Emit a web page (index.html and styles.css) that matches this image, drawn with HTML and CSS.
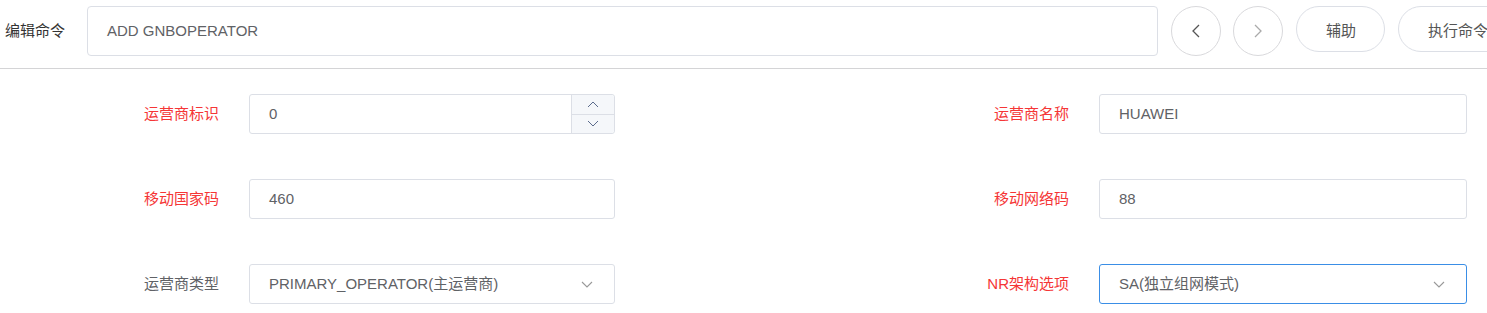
FILE: index.html
```html
<!DOCTYPE html>
<html lang="zh-CN">
<head>
<meta charset="utf-8">
<title>编辑命令</title>
<link rel="stylesheet" href="styles.css">
</head>
<body>
<div class="header">
  <div class="cmd-label">编辑命令</div>
  <div class="cmd-input">ADD GNBOPERATOR</div>
  <button class="circle-btn">
    <svg width="10" height="14" viewBox="0 0 10 14"><path d="M8 1 L2 7 L8 13" fill="none" stroke="#555" stroke-width="1.3"/></svg>
  </button>
  <button class="circle-btn disabled">
    <svg width="10" height="14" viewBox="0 0 10 14"><path d="M2 1 L8 7 L2 13" fill="none" stroke="#aaa" stroke-width="1.3"/></svg>
  </button>
  <button class="pill-btn">辅助</button>
  <button class="pill-btn">执行命令</button>
</div>

<div class="form">
  <div class="row">
    <div class="label req">运营商标识</div>
    <div class="field number">
      <span class="value">0</span>
      <div class="spinner">
        <div class="spin-up"><svg width="12" height="7" viewBox="0 0 12 7"><path d="M1 6 L6 1 L11 6" fill="none" stroke="#5b6b8c" stroke-width="1"/></svg></div>
        <div class="spin-down"><svg width="12" height="7" viewBox="0 0 12 7"><path d="M1 1 L6 6 L11 1" fill="none" stroke="#5b6b8c" stroke-width="1"/></svg></div>
      </div>
    </div>
    <div class="label req">运营商名称</div>
    <div class="field"><span class="value">HUAWEI</span></div>
  </div>

  <div class="row">
    <div class="label req">移动国家码</div>
    <div class="field"><span class="value">460</span></div>
    <div class="label req">移动网络码</div>
    <div class="field"><span class="value">88</span></div>
  </div>

  <div class="row">
    <div class="label">运营商类型</div>
    <div class="field select">
      <span class="value">PRIMARY_OPERATOR(主运营商)</span>
      <svg class="arrow" width="12" height="7" viewBox="0 0 12 7"><path d="M1 1 L6 6 L11 1" fill="none" stroke="#999" stroke-width="1.1"/></svg>
    </div>
    <div class="label req">NR架构选项</div>
    <div class="field select focused">
      <span class="value">SA(独立组网模式)</span>
      <svg class="arrow" width="12" height="7" viewBox="0 0 12 7"><path d="M1 1 L6 6 L11 1" fill="none" stroke="#999" stroke-width="1.1"/></svg>
    </div>
  </div>
</div>
</body>
</html>
```

FILE: styles.css
```css
html, body {
  margin: 0;
  padding: 0;
  background: #fff;
  overflow: hidden;
}

body {
  font-family: "Liberation Sans", "Noto Sans CJK SC", sans-serif;
  font-size: 15px;
  color: #606266;
}

.header {
  display: flex;
  align-items: flex-start;
  padding: 6px 0 0 5px;
  height: 62px;
  border-bottom: 1px solid #d4d4d6;
  white-space: nowrap;
}

.cmd-label {
  flex: 0 0 auto;
  line-height: 50px;
  color: #333;
  margin-right: 22px;
}

.cmd-input {
  flex: 0 0 auto;
  box-sizing: border-box;
  width: 1071px;
  height: 50px;
  line-height: 48px;
  border: 1px solid #dcdfe6;
  border-radius: 4px;
  padding-left: 19px;
  color: #5f6266;
  margin-right: 13px;
}

.circle-btn {
  flex: 0 0 auto;
  box-sizing: border-box;
  width: 50px;
  height: 50px;
  border-radius: 50%;
  border: 1px solid #d9d9dc;
  background: #fff;
  margin: 0 12px 0 0;
  padding: 0;
  display: flex;
  align-items: center;
  justify-content: center;
}

.pill-btn {
  flex: 0 0 auto;
  box-sizing: border-box;
  height: 46px;
  border-radius: 23px;
  border: 1px solid #dcdfe6;
  background: #fff;
  padding: 0 28px 0 29px;
  margin: 0 12px 0 1px;
  font-family: inherit;
  font-size: 15px;
  color: #555;
}

.form {
  padding-top: 25px;
  display: flex;
  flex-direction: column;
  gap: 45px;
}

.row {
  display: grid;
  grid-template-columns: 249px 366px 484px 368px;
  height: 40px;
}

.label {
  text-align: right;
  padding-right: 30px;
  line-height: 40px;
  color: #606266;
}

.label.req {
  color: #f53636;
}

.field {
  position: relative;
  box-sizing: border-box;
  height: 40px;
  border: 1px solid #dcdfe6;
  border-radius: 3px;
  padding-left: 19px;
  line-height: 38px;
  color: #5f6266;
  display: flex;
  align-items: center;
}

.field .value {
  flex: 1;
}

.field.focused {
  border-color: #3a8ee6;
}

.field.select .arrow {
  margin-right: 21px;
}

.spinner {
  align-self: stretch;
  width: 42px;
  background: #f5f7fa;
  border-left: 1px solid #dcdfe6;
  border-radius: 0 3px 3px 0;
  display: flex;
  flex-direction: column;
}

.spin-up, .spin-down {
  flex: 1;
  display: flex;
  align-items: center;
  justify-content: center;
}

.spin-up {
  border-bottom: 1px solid #dcdfe6;
}
```
